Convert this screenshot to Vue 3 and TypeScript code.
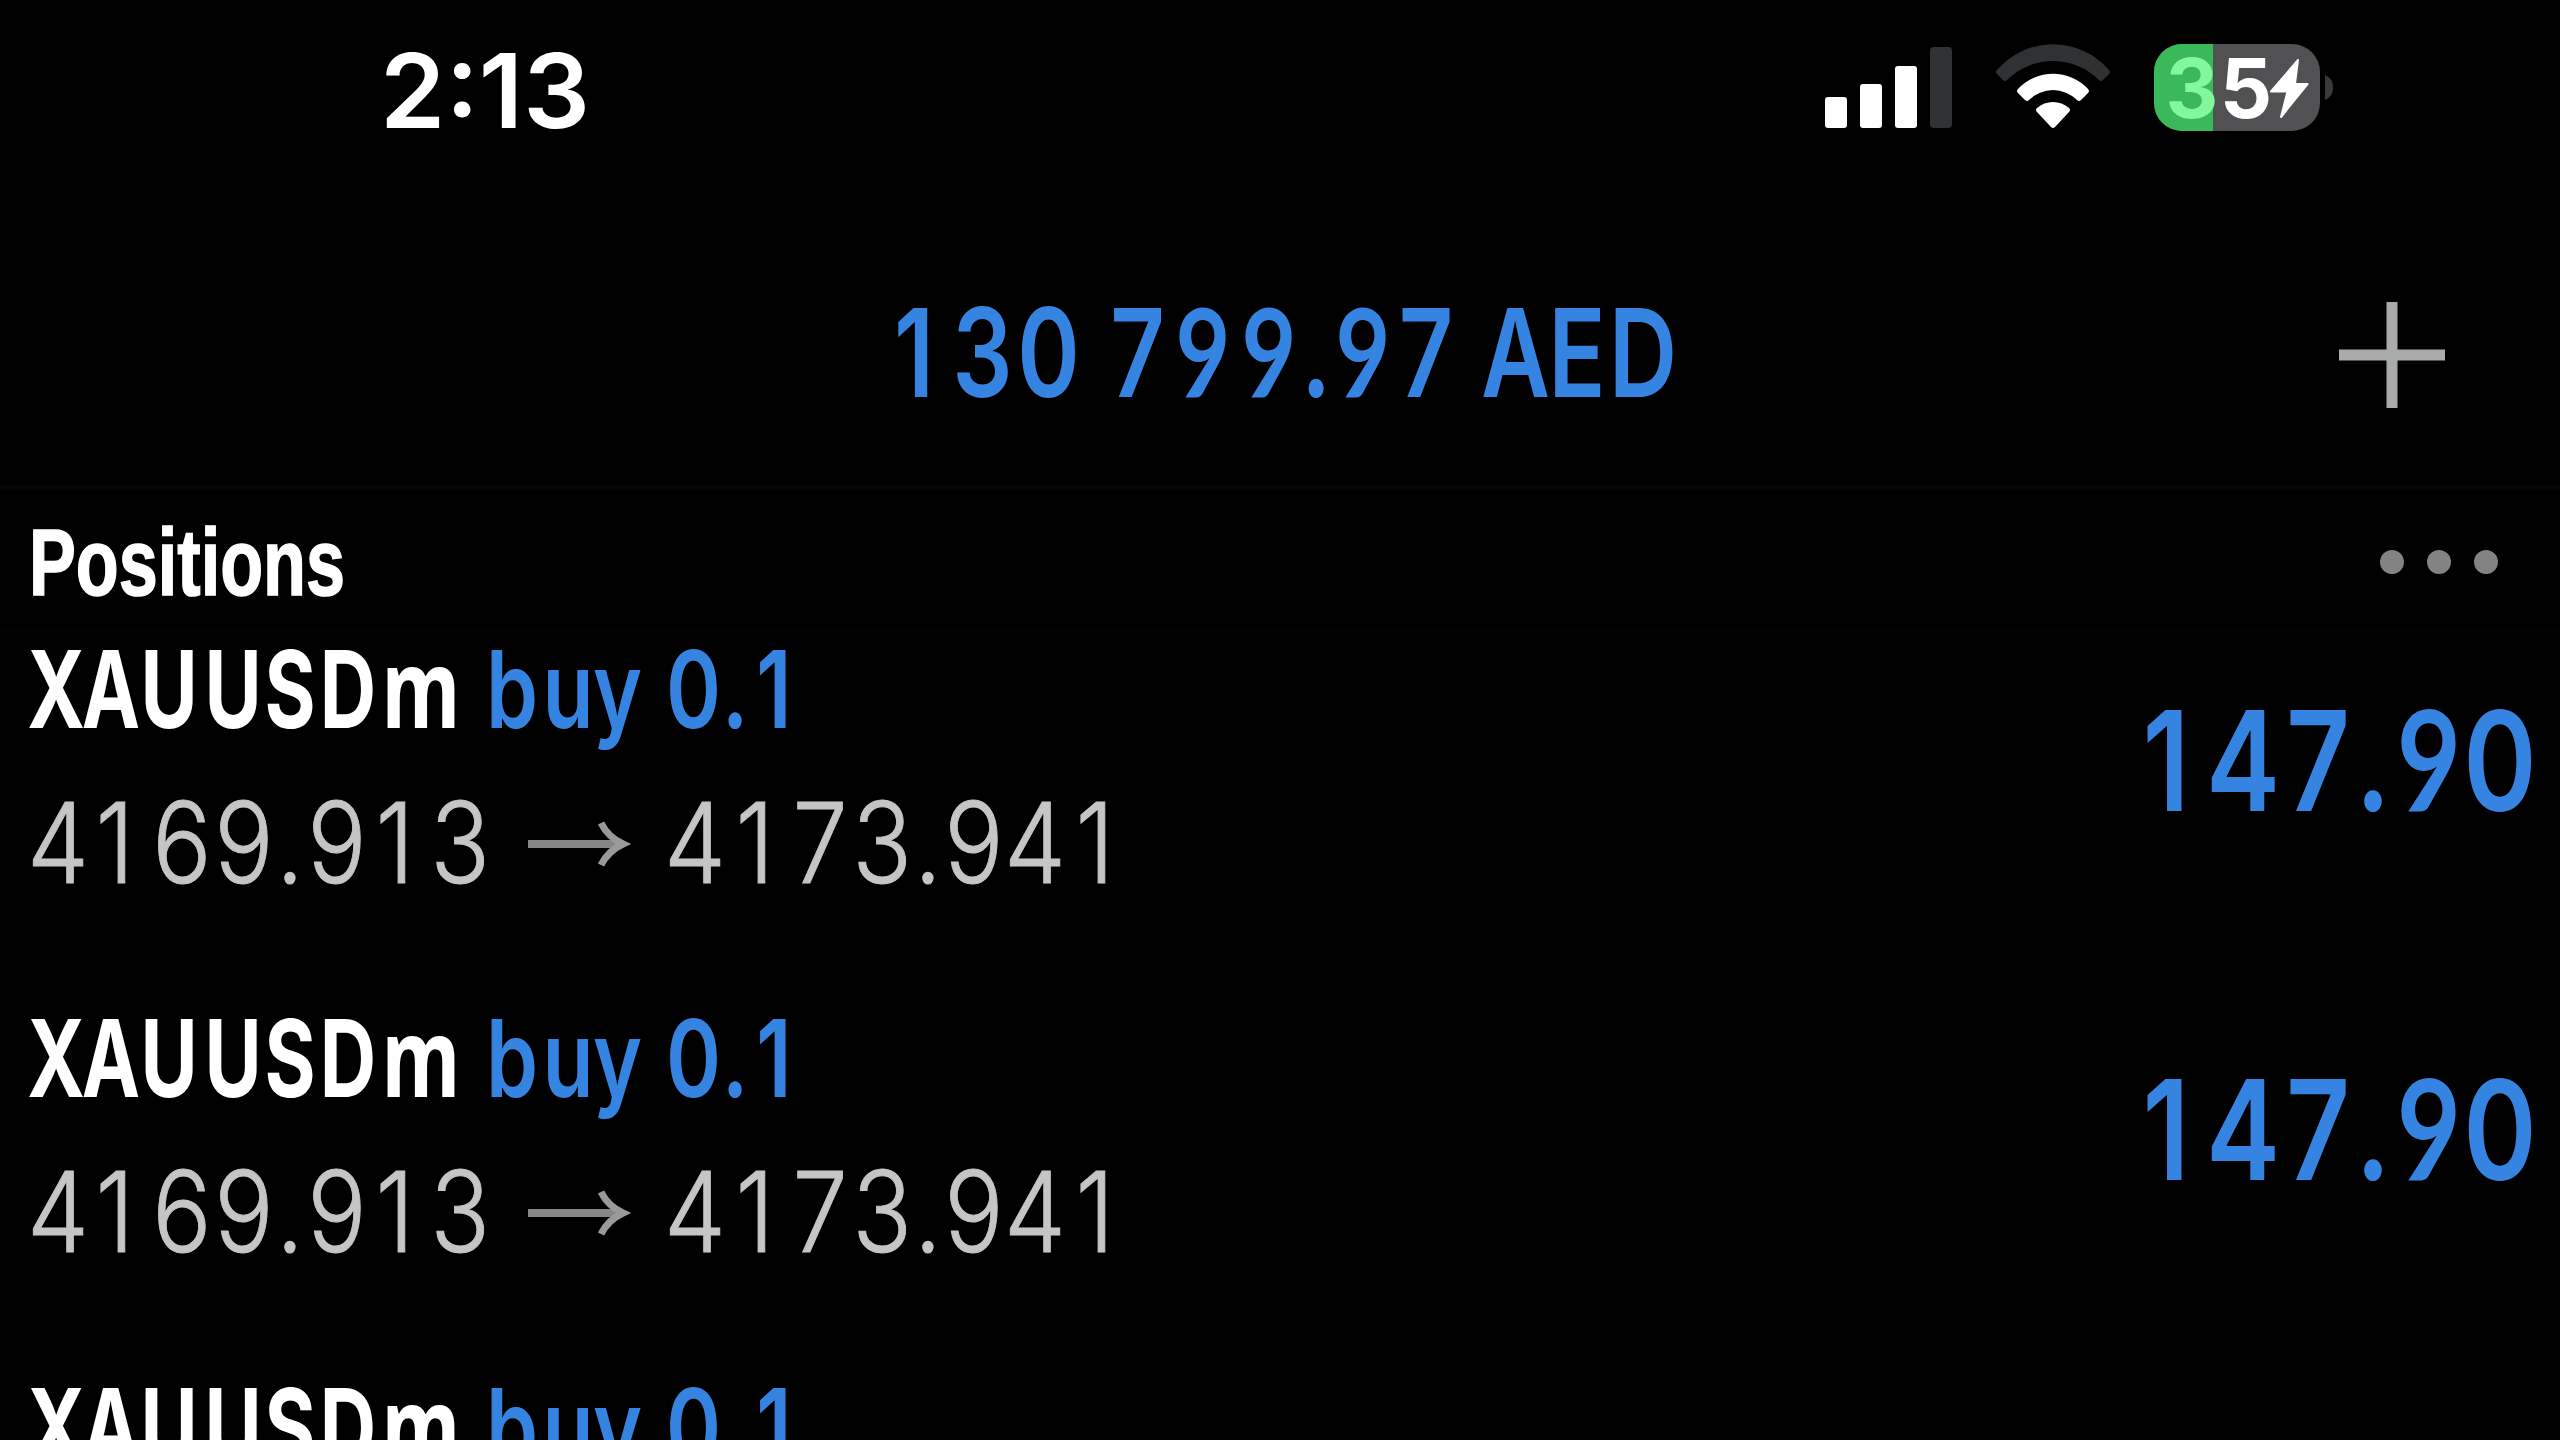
<script setup lang="ts">
interface Glyph {
  char: string
  x: number
}

interface Run {
  glyphs: Glyph[]
  transform: string
}

// Condensed figures: every glyph is centred on its own column.
function run(text: string, centers: number[], scale: number): Run {
  return {
    glyphs: [...text].map((char, i) => ({ char, x: centers[i] / scale })),
    transform: `scale(${scale} 1)`,
  }
}

const balance = run(
  '130 799.97 AED',
  [20, 88.5, 154.5, 200, 243.5, 309, 375, 422, 469, 532, 575, 621.5, 683, 749],
  0.77,
)

const symbol = run('XAUUSDm', [28, 83, 141, 205, 262, 320, 393], 0.73)
const side = run('buy 0.1', [22, 78, 127.5, 160, 203.5, 245, 284], 0.78)
const open = run('4169.913', [30, 87, 154, 216, 262, 309, 367, 432], 0.88)
const current = run('4173.941', [30, 90, 155, 217, 263, 309, 370, 430], 0.88)
const profit = run('147.90', [26, 103, 178, 233, 289, 360], 0.8)

const positions = [1, 2, 3].map((id) => ({ id, symbol, side, open, current, profit }))
</script>

<template>
  <main class="screen">
    <header class="status">
      <svg class="clock" width="216" height="100" viewBox="0 0 216 100">
        <text x="0" y="88" textLength="210" lengthAdjust="spacingAndGlyphs">2:13</text>
      </svg>
      <div class="indicators">
        <svg width="128" height="100" viewBox="0 0 128 100" fill="#fff">
          <rect x="0" y="57" width="22" height="31" rx="3" />
          <rect x="35" y="44" width="22" height="44" rx="3" />
          <rect x="70" y="26" width="22" height="62" rx="3" />
          <rect x="105" y="7" width="22" height="81" rx="4" fill="#303132" />
        </svg>
        <svg class="wifi" width="116" height="100" viewBox="0 0 116 100">
          <path fill="#303132" d="M2 30A74 74 0 0 1 114 30Q116 32 114 34L108 40Q106 42 104 40A65 65 0 0 0 12 40Q10 42 8 40L2 34Q0 32 2 30Z" />
          <path fill="#fff" d="M23 49A48 48 0 0 1 93 49Q95 51 93 53L86 60Q84 62 82 60A34 34 0 0 0 34 60Q32 62 30 60L23 53Q21 51 23 49Z" />
          <path fill="#fff" d="M42 68A24 24 0 0 1 74 68Q76 70 74 72L60 87Q58 89 56 87L42 72Q40 70 42 68Z" />
        </svg>
        <svg class="battery" width="182" height="100" viewBox="0 0 182 100">
          <clipPath id="cell"><rect x="0" y="4" width="166" height="87" rx="28" /></clipPath>
          <g clip-path="url(#cell)">
            <rect width="166" height="100" fill="#515153" />
            <rect width="59" height="100" fill="#3bb95a" />
          </g>
          <path fill="#3a3a3c" d="M171 35q8 3 8 12.500t-8 12.500z" />
          <text x="38 92" y="78"><tspan fill="#82f79b">3</tspan><tspan fill="#fff">5</tspan></text>
          <path fill="#fff" stroke="#fff" stroke-width="2" stroke-linejoin="round" d="M144 20L117 51.500H133.500L127 77L153.500 44H141Z" />
        </svg>
      </div>
    </header>

    <div class="toolbar">
      <svg class="balance figures" width="790" height="120" viewBox="0 0 790 120">
        <text y="105" :transform="balance.transform"><tspan v-for="(g, i) in balance.glyphs" :key="i" :x="g.x" :class="{ nine: g.char === '9' }">{{ g.char }}</tspan></text>
      </svg>
      <svg class="add" width="106" height="106" viewBox="0 0 106 106" stroke="#a9abab" stroke-width="11">
        <path d="M0 53H106M53 0V106" />
      </svg>
    </div>

    <div class="section">
      <svg width="330" height="90" viewBox="0 0 330 90">
        <text class="heading" x="0" y="74" textLength="316" lengthAdjust="spacingAndGlyphs">Positions</text>
      </svg>
      <div class="more"><i /><i /><i /></div>
    </div>

    <section v-for="p in positions" :key="p.id" class="row">
      <div class="details">
        <div class="line">
          <svg class="symbol" width="462" height="130" viewBox="0 0 462 130">
            <text y="96" :transform="p.symbol.transform"><tspan v-for="(g, i) in p.symbol.glyphs" :key="i" :x="g.x" :class="{ wide: g.char === 'm' }">{{ g.char }}</tspan></text>
          </svg>
          <svg class="side figures" width="310" height="130" viewBox="0 0 310 130">
            <text y="96" :transform="p.side.transform"><tspan v-for="(g, i) in p.side.glyphs" :key="i" :x="g.x">{{ g.char }}</tspan></text>
          </svg>
        </div>
        <div class="line prices">
          <svg width="470" height="120" viewBox="0 0 470 120">
            <text y="99" :transform="p.open.transform"><tspan v-for="(g, i) in p.open.glyphs" :key="i" :x="g.x">{{ g.char }}</tspan></text>
          </svg>
          <svg class="arrow" width="100" height="50" viewBox="0 0 100 50" fill="none">
            <path stroke="#868686" stroke-width="8" d="M0 25H92" />
            <path stroke="#9a9a9a" stroke-width="7" d="M73 4Q80 18 95 25Q80 32 73 46" />
          </svg>
          <svg width="470" height="120" viewBox="0 0 470 120">
            <text y="99" :transform="p.current.transform"><tspan v-for="(g, i) in p.current.glyphs" :key="i" :x="g.x">{{ g.char }}</tspan></text>
          </svg>
        </div>
      </div>
      <svg class="profit figures" width="400" height="130" viewBox="0 0 400 130">
        <text y="112" :transform="p.profit.transform"><tspan v-for="(g, i) in p.profit.glyphs" :key="i" :x="g.x" :class="{ nine: g.char === '9' }">{{ g.char }}</tspan></text>
      </svg>
    </section>
  </main>
</template>

<style>
body {
  background: #000;
}
</style>

<style scoped>
.screen {
  width: 2560px;
  height: 1440px;
  overflow: hidden;
  background: #000;
  display: flex;
  flex-direction: column;
  font-family: Inter, sans-serif;
  color: #fff;
}
svg {
  display: block;
  flex: none;
  overflow: visible;
}
.status {
  flex: none;
  box-sizing: border-box;
  height: 180px;
  padding: 40px 224px 0 380px;
  display: flex;
  justify-content: space-between;
}
.clock text {
  font-size: 103px;
  font-weight: 600;
  fill: #fff;
}
.indicators {
  display: flex;
}
.indicators svg:first-child {
  margin-right: 42px;
}
.wifi {
  margin-right: 43px;
}
.battery text {
  font-size: 82px;
  font-weight: 700;
  text-anchor: middle;
}
.toolbar {
  flex: none;
  box-sizing: border-box;
  height: 305px;
  padding: 112px 115px 0 894px;
  display: flex;
  justify-content: space-between;
}
.figures text,
.symbol text,
.prices text {
  text-anchor: middle;
  white-space: pre;
}
.figures text {
  fill: #3584e2;
  font-weight: 600;
}
.figures .nine {
  font-family: Lato, sans-serif;
  font-weight: 700;
}
.balance text {
  font-size: 123px;
}
.add {
  margin-top: 10px;
}
.section {
  flex: none;
  box-sizing: border-box;
  height: 147px;
  padding: 30px 62px 0 29px;
  display: flex;
  justify-content: space-between;
  background: #010101;
  border-top: 6px solid #050505;
  border-bottom: 3px solid #040404;
}
.heading {
  font-family: 'Liberation Sans', Arial, sans-serif;
  font-size: 94px;
  font-weight: 700;
  fill: #fff;
  stroke: #fff;
  stroke-width: 1.5px;
}
.more {
  display: flex;
  gap: 23px;
  margin-top: 29px;
}
.more i {
  width: 24px;
  height: 24px;
  border-radius: 50%;
  background: #838383;
}
.row {
  flex: none;
  height: 369px;
  display: flex;
  justify-content: space-between;
  padding: 0 20px 0 28px;
}
.line {
  display: flex;
}
.symbol text {
  font-size: 107px;
  font-weight: 650;
  fill: #fff;
}
.symbol .wide {
  font-family: 'Noto Sans', sans-serif;
  font-size: 110px;
  font-weight: 700;
}
.side text {
  font-size: 107px;
}
.prices {
  margin-top: 22px;
  align-items: center;
}
.prices text {
  font-size: 112px;
  font-weight: 300;
  fill: #c4c5c6;
  stroke: #c4c5c6;
  stroke-width: 1px;
}
.arrow {
  margin: 0 37px 0 30px;
}
.profit {
  margin-top: 67px;
}
.profit text {
  font-size: 139px;
}
</style>
